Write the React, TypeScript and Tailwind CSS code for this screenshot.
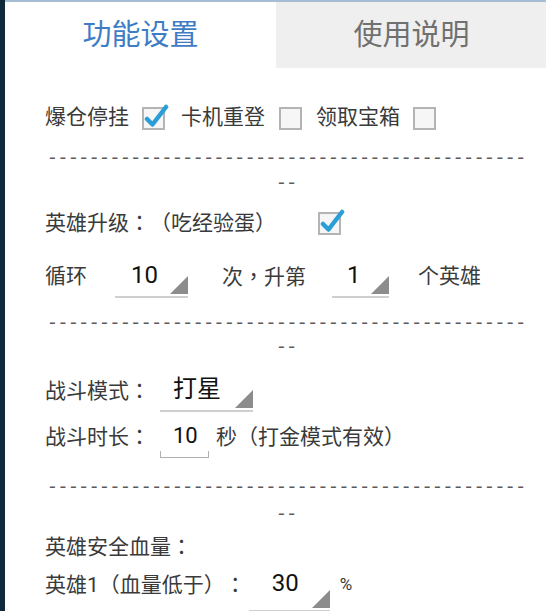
import React from "react";

const DASHES = "----------------------------------------------";

// full-width punctuation, centred like the device font
const P = ({ children }: { children: React.ReactNode }) => (
  <span className="font-['Noto_Sans_CJK_TC',sans-serif]">{children}</span>
);

const CheckBox = ({ checked, className }: { checked: boolean; className: string }) => (
  <svg width="28" height="30" viewBox="0 0 28 30" className={className}>
    <rect x="2" y="6" width="21" height="21" fill="#f6f6f6" stroke="#b4b4b4" strokeWidth="2" />
    {checked && (
      <path
        d="M6 17 L11.5 22.5 L25 5"
        fill="none"
        stroke="#2b9ed8"
        strokeWidth="4.5"
        strokeLinecap="round"
        strokeLinejoin="round"
      />
    )}
  </svg>
);

const Corner = () => (
  <svg width="18" height="18" viewBox="0 0 18 18" className="absolute right-0 bottom-[2px]">
    <path d="M18 0 L18 18 L0 18 Z" fill="#8c8c8c" />
  </svg>
);

const Dashes = ({ className }: { className: string }) => (
  <div className={"shrink-0 text-center text-[21px] text-[#5a5a5a] font-[Roboto,sans-serif] whitespace-nowrap " + className}>
    <div className="tracking-[4.6px] pl-[4.6px]">{DASHES}</div>
    <div className="tracking-[4.6px] pl-[4.6px]">--</div>
  </div>
);

export default function App() {
  return (
    <div className="flex w-[546px] h-[611px] overflow-hidden bg-white [text-spacing-trim:space-all] font-[Roboto,'Noto_Sans_CJK_SC',sans-serif]">
      <div className="w-[5px] shrink-0 bg-[#0f2b3b]" />
      <div className="flex-1 flex flex-col">
        {/* tabs */}
        <div className="shrink-0 grid grid-cols-2 h-[68px] border-t-2 border-[#a6bcd3]">
          <div className="flex items-center justify-center bg-white text-[29px] text-[#3f7cc6] leading-none">
            功能设置
          </div>
          <div className="flex items-center justify-center bg-[#efefef] text-[29px] text-[#707070] leading-none">
            使用说明
          </div>
        </div>

        <div className="flex flex-col pl-[40px] pr-[19px] text-[21px] text-[#3a3a3a] leading-none">
          {/* row 1 */}
          <div className="shrink-0 flex items-center h-[44px] mt-[27px]">
            <span>爆仓停挂</span>
            <CheckBox checked className="ml-[12px]" />
            <span className="ml-[12px]">卡机重登</span>
            <CheckBox checked={false} className="ml-[13px]" />
            <span className="ml-[10px]">领取宝箱</span>
            <CheckBox checked={false} className="ml-[12px]" />
          </div>

          <Dashes className="leading-[25px] mt-[6px]" />

          {/* hero upgrade */}
          <div className="shrink-0 flex items-center h-[44px] mt-[5px]">
            <span>
              英雄升级<P>：（</P>吃经验蛋<P>）</P>
            </span>
            <CheckBox checked className="ml-[41px]" />
          </div>

          <div className="shrink-0 flex items-center h-[44px] mt-[10px]">
            <span>循环</span>
            <div className="relative ml-[28px] w-[73px] h-[44px] flex items-center pl-[16px] border-b-2 border-[#cfcfcf]">
              <span className="text-[24px] text-[#111]">10</span>
              <Corner />
            </div>
            <span className="ml-[34px]">
              次<P>，</P>升第
            </span>
            <div className="relative ml-[26px] w-[57px] h-[44px] flex items-center pl-[15px] border-b-2 border-[#cfcfcf]">
              <span className="text-[24px] text-[#111]">1</span>
              <Corner />
            </div>
            <span className="ml-[29px]">个英雄</span>
          </div>

          <Dashes className="leading-[24px] mt-[12px]" />

          {/* battle */}
          <div className="shrink-0 flex items-center h-[44px] mt-[10px]">
            <span>
              战斗模式<P>：</P>
            </span>
            <div className="relative ml-[10px] w-[93px] h-[44px] flex items-center pl-[13px] border-b-2 border-[#cfcfcf]">
              <span className="text-[24px] text-[#111]">打星</span>
              <Corner />
            </div>
          </div>

          <div className="shrink-0 flex items-center h-[44px] mt-[2px]">
            <span>
              战斗时长<P>：</P>
            </span>
            <div className="relative ml-[10px] w-[49px] h-[44px] flex items-center pl-[12px] border-b border-x border-[#b0b0b0] [border-image:linear-gradient(to_bottom,transparent_85%,#b0b0b0_85%)_1]">
              <span className="text-[22px] text-[#111]">10</span>
            </div>
            <span className="ml-[7px]">
              秒<P>（</P>打金模式有效<P>）</P>
            </span>
          </div>

          <Dashes className="leading-[27px] mt-[15px]" />

          <div className="shrink-0 flex items-center h-[36px] mt-[1px]">
            <span>
              英雄安全血量<P>：</P>
            </span>
          </div>

          <div className="shrink-0 flex items-center h-[40px]">
            <span>
              英雄1<P>（</P>血量低于<P>）：</P>
            </span>
            <div className="relative ml-[3px] w-[81px] h-[48px] mt-[8px] flex items-center pl-[23px] border-b-2 border-[#cfcfcf]">
              <span className="text-[24px] text-[#111] -mt-[8px]">30</span>
              <Corner />
            </div>
            <span className="ml-[10px] text-[17px]">%</span>
          </div>
        </div>
      </div>
    </div>
  );
}
